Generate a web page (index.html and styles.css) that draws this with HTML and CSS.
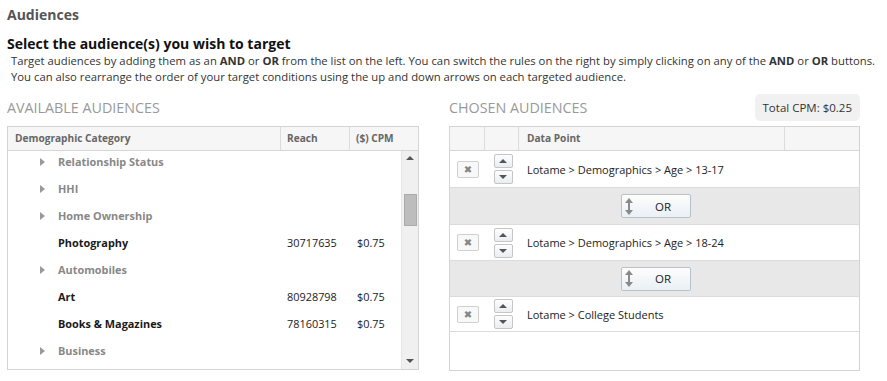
FILE: index.html
```html
<!DOCTYPE html>
<html>
<head>
<meta charset="utf-8">
<link rel="stylesheet" href="styles.css">
</head>
<body>
<div class="page">
  <h1 class="title">Audiences</h1>
  <h2 class="subtitle">Select the audience(s) you wish to target</h2>
  <p class="desc">Target audiences by adding them as an <b>AND</b> or <b>OR</b> from the list on the left. You can switch the rules on the right by simply clicking on any of the <b>AND</b> or <b>OR</b> buttons.<br>You can also rearrange the order of your target conditions using the up and down arrows on each targeted audience.</p>

  <div class="cols">
    <section class="col">
      <div class="col-head"><h3 class="section">AVAILABLE AUDIENCES</h3></div>
      <div class="box left-box">
        <div class="lhead">
          <div class="lh c-name">Demographic Category</div>
          <div class="lh c-reach">Reach</div>
          <div class="lh c-cpm">($) CPM</div>
        </div>
        <div class="lbody">
          <div class="list">
            <div class="row group"><span class="tri"></span><span class="c-name">Relationship Status</span></div>
            <div class="row group"><span class="tri"></span><span class="c-name">HHI</span></div>
            <div class="row group"><span class="tri"></span><span class="c-name">Home Ownership</span></div>
            <div class="row leaf"><span class="notri"></span><span class="c-name">Photography</span><span class="c-reach">30717635</span><span class="c-cpm">$0.75</span></div>
            <div class="row group"><span class="tri"></span><span class="c-name">Automobiles</span></div>
            <div class="row leaf"><span class="notri"></span><span class="c-name">Art</span><span class="c-reach">80928798</span><span class="c-cpm">$0.75</span></div>
            <div class="row leaf"><span class="notri"></span><span class="c-name">Books &amp; Magazines</span><span class="c-reach">78160315</span><span class="c-cpm">$0.75</span></div>
            <div class="row group"><span class="tri"></span><span class="c-name">Business</span></div>
          </div>
          <div class="scrollbar">
            <span class="sb-up"></span>
            <span class="sb-track"><span class="sb-thumb"></span></span>
            <span class="sb-down"></span>
          </div>
        </div>
      </div>
    </section>

    <section class="col">
      <div class="col-head">
        <h3 class="section">CHOSEN AUDIENCES</h3>
        <div class="total">Total CPM: $0.25</div>
      </div>
      <div class="box right-box">
        <div class="rhead">
          <div class="rh r1"></div>
          <div class="rh r2"></div>
          <div class="rh r3">Data Point</div>
          <div class="rh r4"></div>
        </div>
        <div class="arow a1">
          <div class="r1"><span class="xbtn">✖</span></div>
          <div class="r2 arrows"><span class="abtn"><span class="up"></span></span><span class="abtn"><span class="down"></span></span></div>
          <div class="r3">Lotame &gt; Demographics &gt; Age &gt; 13-17</div>
        </div>
        <div class="band b1"><span class="orbtn"><svg class="updown" width="8" height="17" viewBox="0 0 8 17"><path d="M4 0 L8 5 L5 5 L5 12 L8 12 L4 17 L0 12 L3 12 L3 5 L0 5 Z" fill="#8a8a8a"/></svg><span class="ortxt">OR</span></span></div>
        <div class="arow a2">
          <div class="r1"><span class="xbtn">✖</span></div>
          <div class="r2 arrows"><span class="abtn"><span class="up"></span></span><span class="abtn"><span class="down"></span></span></div>
          <div class="r3">Lotame &gt; Demographics &gt; Age &gt; 18-24</div>
        </div>
        <div class="band b2"><span class="orbtn"><svg class="updown" width="8" height="17" viewBox="0 0 8 17"><path d="M4 0 L8 5 L5 5 L5 12 L8 12 L4 17 L0 12 L3 12 L3 5 L0 5 Z" fill="#8a8a8a"/></svg><span class="ortxt">OR</span></span></div>
        <div class="arow a3">
          <div class="r1"><span class="xbtn">✖</span></div>
          <div class="r2 arrows"><span class="abtn"><span class="up"></span></span><span class="abtn"><span class="down"></span></span></div>
          <div class="r3">Lotame &gt; College Students</div>
        </div>
      </div>
    </section>
  </div>
</div>
</body>
</html>
```

FILE: styles.css
```css
* { box-sizing: border-box; }
html, body { margin: 0; padding: 0; background: #fff; }
body { font-family: "Open Sans", "DejaVu Sans", sans-serif; color: #333; }
.page { padding: 4px 7px 0 7px; width: 887px; }
.title { margin: 0; font-size: 14px; line-height: 22px; font-weight: 700; color: #555; }
.subtitle { margin: 9px 0 0; font-size: 14px; line-height: 18px; font-weight: 700; color: #111; }
.desc { margin: 0; padding-left: 4px; font-size: 11.3px; line-height: 16px; color: #333; white-space: nowrap; }
.desc b { font-weight: 700; color: #333; }
.cols { display: flex; gap: 30px; margin-top: 9px; }
.col { width: 412px; }
.col:last-child { width: 411px; }
.col-head { display: flex; justify-content: space-between; align-items: center; height: 32px; padding-bottom: 6px; }
.section { margin: 0; font-size: 14.3px; font-weight: 400; color: #999; }
.total { background: #f1f1f1; border-radius: 5px; font-size: 11.5px; color: #333; padding: 0 8px; height: 27px; line-height: 27px; margin-top: 1px; }
.box { border: 1px solid #d4d4d4; background: #fff; }
.left-box { height: 244px; }
.right-box { height: 245px; }
.lhead { display: flex; height: 24px; background: #f6f6f6; border-bottom: 1px solid #d6d6d6; }
.lh { font-size: 10.15px; font-weight: 700; color: #666; line-height: 23px; border-right: 1px solid #dcdcdc; }
.lh.c-name { width: 273px; padding-left: 7px; }
.lh.c-reach { width: 69px; padding-left: 6px; }
.lh.c-cpm { flex: 1; padding-left: 6px; border-right: 0; }
.lbody { display: flex; height: 218px; }
.list { flex: 1; overflow: hidden; margin-top: -3px; }
.row { display: flex; align-items: center; height: 27px; font-size: 10.9px; font-weight: 700; }
.row.group { color: #888; }
.row.leaf { color: #1a1a1a; }
.tri { width: 0; height: 0; border-top: 4px solid transparent; border-bottom: 4px solid transparent; border-left: 5px solid #999; margin-left: 32px; margin-right: 13px; }
.notri { width: 50px; }
.row .c-name { width: 229px; }
.row .c-reach { width: 70px; font-weight: 400; }
.row .c-cpm { font-weight: 400; }
.scrollbar { width: 17px; background: #f0f0f0; border-left: 1px solid #e6e6e6; display: flex; flex-direction: column; align-items: center; }
.sb-up { margin-top: 5px; width: 0; height: 0; border-left: 4px solid transparent; border-right: 4px solid transparent; border-bottom: 4px solid #555; }
.sb-track { flex: 1; width: 100%; display: flex; justify-content: center; }
.sb-thumb { margin-top: 34px; width: 13px; height: 32px; background: #bdbdbd; border: 1px solid #aaa; }
.sb-down { margin-bottom: 6px; width: 0; height: 0; border-left: 4px solid transparent; border-right: 4px solid transparent; border-top: 4px solid #555; }

.rhead { display: flex; height: 24px; background: #f6f6f6; border-bottom: 1px solid #d6d6d6; }
.rh { border-right: 1px solid #dcdcdc; font-size: 10.15px; font-weight: 700; color: #666; line-height: 23px; }
.r1 { width: 35px; }
.r2 { width: 34px; }
.r3 { width: 266px; }
.rh.r3 { padding-left: 8px; }
.r4 { flex: 1; border-right: 0; }
.arow { display: flex; align-items: center; height: 37px; border-bottom: 1px solid #dcdcdc; background: #fff; }
.arow.a2 { height: 36px; }
.arow.a3 { height: 35px; }
.arow .r3 { padding-left: 8px; font-size: 11px; color: #222; width: auto; }
.arow .r1 { display: flex; justify-content: flex-end; align-items: center; }
.xbtn { flex: none; display: block; width: 22px; height: 17px; border: 1px solid #d0d0d0; border-radius: 2px; background: #f8f8f8; color: #858585; font-size: 10px; line-height: 15px; text-align: center; margin-right: 6px; }
.arrows { display: flex; flex-direction: column; align-items: center; gap: 2px; padding-left: 2px; }
.abtn { width: 19px; height: 14px; border: 1px solid #c5c5c5; border-radius: 2px; background: linear-gradient(#fdfdfd, #e9eef3); display: flex; align-items: center; justify-content: center; }
.up { width: 0; height: 0; border-left: 4px solid transparent; border-right: 4px solid transparent; border-bottom: 4px solid #555; }
.down { width: 0; height: 0; border-left: 4px solid transparent; border-right: 4px solid transparent; border-top: 4px solid #555; }
.band { height: 37px; background: #e8e8e8; border-bottom: 1px solid #dcdcdc; display: flex; align-items: center; justify-content: center; padding-left: 2px; }
.band.b2 { height: 36px; }
.orbtn { width: 70px; height: 24px; border: 1px solid #b9c2cb; border-radius: 2px; background: linear-gradient(#fdfdfd, #eaf0f5); display: flex; align-items: center; padding-left: 3px; }
.updown { display: block; }
.ortxt { flex: 1; text-align: center; font-size: 11.5px; color: #222; padding-left: 4px; }
```
